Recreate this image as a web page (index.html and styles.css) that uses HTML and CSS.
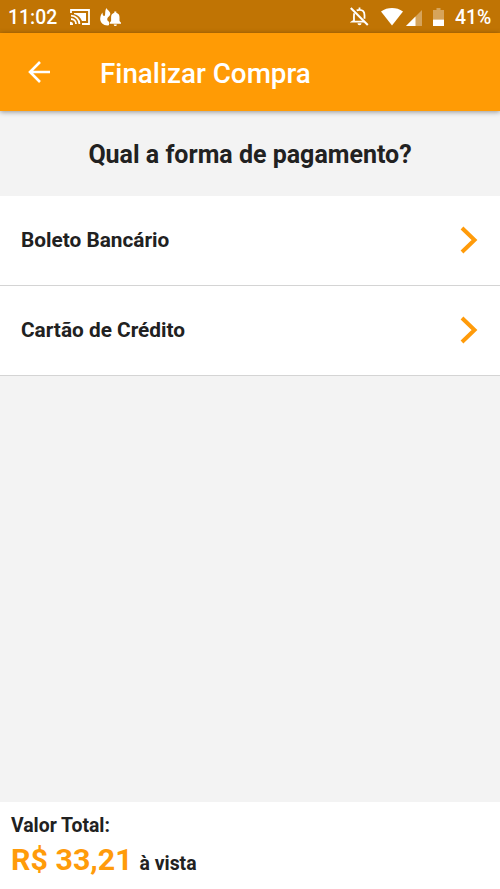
FILE: index.html
```html
<!DOCTYPE html>
<html lang="pt-BR">
<head>
<meta charset="utf-8">
<title>Finalizar Compra</title>
<link rel="stylesheet" href="styles.css">
</head>
<body>
<div class="status">
  <span class="time">11:02</span>
  <svg class="cast" width="20" height="16" viewBox="0 0 20 16" fill="none" stroke="#fff" stroke-width="1.8">
    <path d="M1 4V1h18v14h-7M1 6.600a8.400 8.400 0 0 1 8.400 8.400M1 10a5 5 0 0 1 5 5"/>
    <path d="M4 4h12v8h-4C10.500 8.500 8 6 4 5z" fill="#fff" stroke="none"/>
    <path d="M0 12.800A3 3 0 0 1 3 16H0z" fill="#fff" stroke="none"/>
  </svg>
  <svg class="alert" width="21" height="18" viewBox="0 0 21 18" fill="#fff">
    <path d="M6.500 0C7 2 10.500 3.200 10.300 6 10.200 7.500 8.800 8.500 7.800 9.500 6.700 11 7.200 13 9 13.800V17.300C4 18 0 15 .2 10.500.4 7.800 1.300 6 2.500 4.500 2.600 6.500 3 8 4.200 8 6 8 4.300 3 6.500 0z"/>
    <path d="M14.300 3.500h2v1.300c2.100.6 3.200 2.200 3.200 4.300v3.900l1.500 1.700v1.100H9.600v-1.100l1.500-1.700V9.100c0-2.100 1.100-3.700 3.200-4.300zM13.700 16.400h3.200a1.600 1.600 0 0 1-3.200 0z"/>
  </svg>
  <svg class="muted" width="19" height="19" viewBox="0 0 19 19" fill="none" stroke="#fff" stroke-width="1.8">
    <path d="M4.300 6.200C3.700 8 4 10.500 4 13.500L2.400 14.700H14M6.700 3.600C7.800 2.900 8.600 2.900 9.500 2.900c3.300 0 5 2.400 5 5.300v3.500M9.500 3V.5"/>
    <path d="M.8 1l17 17" stroke-width="2"/>
    <path d="M7.500 16.200h4a2 2 0 0 1-4 0z" fill="#fff" stroke="none"/>
  </svg>
  <svg class="wifi" width="22" height="18" viewBox="0 0 22 18"><path d="M0 3.400C6.500-1.100 15.500-1.100 22 3.400L11 17.500z" fill="#fff"/></svg>
  <svg class="signal" width="16" height="16" viewBox="0 0 16 16"><path d="M16 0v16H0z" fill="#fff" opacity=".35"/><path d="M9.500 6.500V16H0z" fill="#fff"/></svg>
  <svg class="battery" width="11" height="18" viewBox="0 0 11 18"><path d="M3.500 0h4v2H11v9.500H0V2h3.500z" fill="#fff" opacity=".35"/><path d="M0 11.500h11V18H0z" fill="#fff"/></svg>
  <span class="percent">41%</span>
</div>
<header class="bar">
  <svg class="back" width="22" height="22" viewBox="0 0 22 22" fill="none" stroke="#fff" stroke-width="2.600"><path d="M22 11H2M12 1L2 11l10 10"/></svg>
  <h1 class="title">Finalizar Compra</h1>
</header>
<main class="content">
  <h2 class="question">Qual a forma de pagamento?</h2>
  <div class="option">
    <span>Boleto Bancário</span>
    <svg width="18" height="28" viewBox="0 0 18 28" fill="none" stroke="#ff9b0a" stroke-width="4"><path d="M2 2l12.500 12L2 26"/></svg>
  </div>
  <div class="option">
    <span>Cartão de Crédito</span>
    <svg width="18" height="28" viewBox="0 0 18 28" fill="none" stroke="#ff9b0a" stroke-width="4"><path d="M2 2l12.500 12L2 26"/></svg>
  </div>
</main>
<footer class="total">
  <div class="label">Valor Total:</div>
  <div class="amount"><span class="price">R$ 33,21</span> à vista</div>
</footer>
</body>
</html>
```
FILE: styles.css
```css
* { box-sizing: border-box; }
body {
  margin: 0;
  height: 889px;
  display: flex;
  flex-direction: column;
  overflow: hidden;
  background: #f3f3f3;
  color: #212121;
  font-family: Roboto, sans-serif;
}
svg { display: block; flex: none; }
.status {
  flex: none;
  height: 33px;
  padding: 0 9px 0 8px;
  display: flex;
  align-items: center;
  background: #c07404;
  color: #fff;
  font-size: 19.4px;
  font-weight: 500;
}
.time { width: 62px; padding-top: 2px; }
.alert { margin-left: 10px; }
.muted { margin-left: auto; }
.wifi { margin-left: 12px; }
.signal { margin: 2px 0 0 3px; }
.battery { margin-left: 11px; }
.percent { width: 36px; margin-left: 11px; padding-top: 2px; }
.bar {
  flex: none;
  height: 78px;
  padding-left: 28px;
  display: flex;
  align-items: center;
  background: #ff9b05;
  color: #fff;
  box-shadow: 0 1px 5px rgba(0, 0, 0, .4);
  z-index: 1;
}
.title { margin: 3px 0 0 50px; font-size: 27.8px; font-weight: 500; }
.content { flex: 1; }
.question {
  margin: 0;
  height: 85px;
  line-height: 88px;
  text-align: center;
  font-size: 25px;
  font-weight: 700;
}
.option {
  height: 90px;
  padding: 0 22px 2px 21px;
  display: flex;
  align-items: center;
  justify-content: space-between;
  background: #fff;
  border-bottom: 1px solid #d4d4d4;
  font-size: 20.8px;
  font-weight: 700;
}
.total {
  flex: none;
  height: 87px;
  padding: 12px 11px 0;
  background: #fff;
  font-size: 19.4px;
  font-weight: 700;
}
.label { line-height: 24px; }
.amount { line-height: 44px; }
.price { margin-right: 2px; color: #ff9b0a; font-size: 30.400px; }
```
